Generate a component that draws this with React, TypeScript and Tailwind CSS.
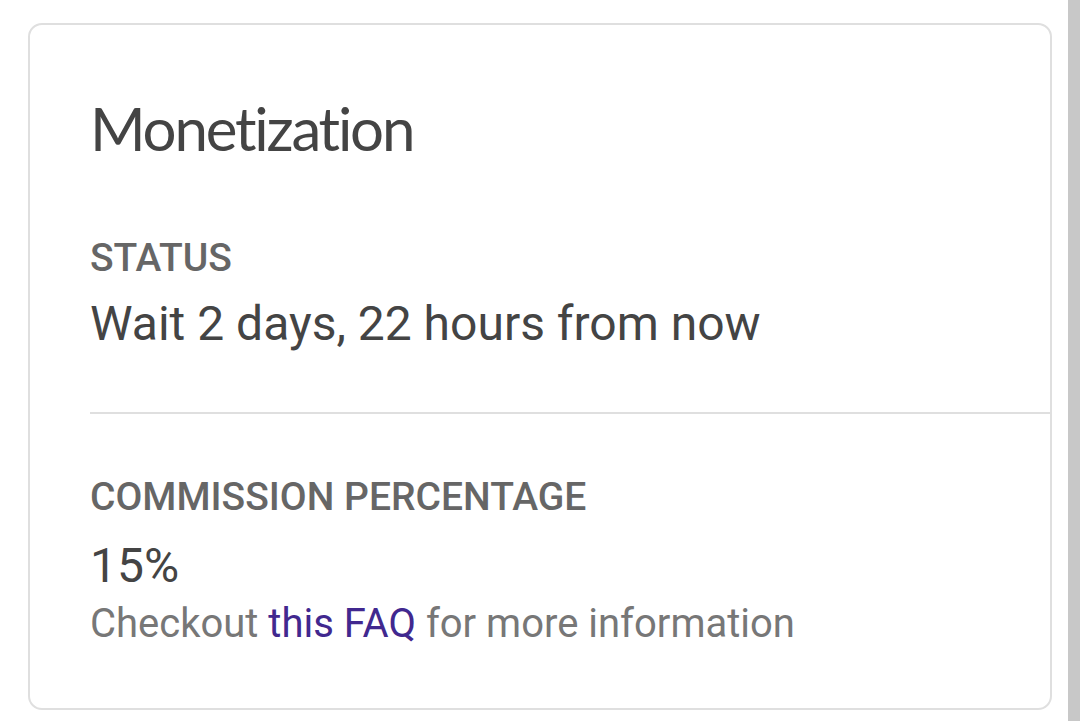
export default function App() {
  return (
    <div className="flex h-[721px] w-full overflow-hidden bg-white">
      <div className="flex-1 pl-[28px] pr-[16px] pt-[23px]">
        <div className="h-[687px] rounded-[14px] border-2 border-[#dfdfdf] pl-[60px] pt-[73px]">
          <h1
            className="text-[60px] leading-none font-normal tracking-[-2.2px] text-[#444444]"
            style={{ fontFamily: "Lato, 'Open Sans', sans-serif" }}
          >
            Monetization
          </h1>

          <div style={{ fontFamily: "Roboto, 'Liberation Sans', sans-serif" }}>
            <div className="mt-[81px] text-[39px] leading-none font-medium text-[#666666]">
              STATUS
            </div>
            <div className="mt-[22px] text-[48px] leading-none text-[#444444]">
              Wait 2 days, 22 hours from now
            </div>

            <div className="mt-[64px] h-[2px] bg-[#dfdfdf]" />

            <div className="mt-[64px] text-[39px] leading-none font-medium text-[#666666]">
              COMMISSION PERCENTAGE
            </div>
            <div className="mt-[25px] text-[48px] leading-none text-[#444444]">15%</div>
            <div className="mt-[14px] text-[40px] leading-none text-[#777777]">
              Checkout{" "}
              <a href="#" className="text-[#41288f]">
                this FAQ
              </a>{" "}
              for more information
            </div>
          </div>
        </div>
      </div>
      <div className="w-[12px] bg-[#c8c8c8]" />
    </div>
  );
}
